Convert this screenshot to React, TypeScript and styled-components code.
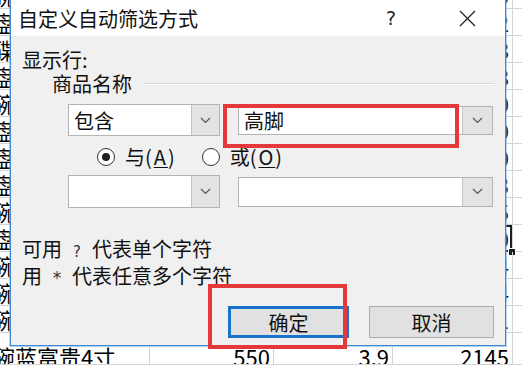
import { createGlobalStyle, styled } from "styled-components"

const GlobalStyle = createGlobalStyle`
  html, body {
    margin: 0;
    padding: 0;
  }
  body {
    width: 522px;
    height: 365px;
    overflow: hidden;
    background: #ffffff;
    font-family: "Noto Sans CJK SC", "Noto Sans", sans-serif;
    color: #000;
  }
`

type SheetRow = { name: string; b: string; c: string; d: string }

const sheetRows: SheetRow[] = [
  { name: "碗白瓷4寸", b: "320", c: "2.5", d: "800" },
  { name: "盘青花8寸", b: "410", c: "4.2", d: "1722" },
  { name: "碟釉下彩", b: "260", c: "1.8", d: "468" },
  { name: "盘金边7寸", b: "180", c: "5.6", d: "1008" },
  { name: "碗青花5寸", b: "300", c: "3.0", d: "900" },
  { name: "盘描金10寸", b: "150", c: "8.8", d: "1320" },
  { name: "盘玲珑6寸", b: "275", c: "4.0", d: "1100" },
  { name: "盘粉彩9寸", b: "205", c: "6.5", d: "1333" },
  { name: "碗骨瓷6寸", b: "330", c: "4.5", d: "1485" },
  { name: "盘白玉8寸", b: "240", c: "5.0", d: "1200" },
  { name: "碗釉里红", b: "190", c: "3.6", d: "684" },
  { name: "碗蓝边4寸", b: "460", c: "2.4", d: "1104" },
  { name: "碗冰裂纹", b: "210", c: "6.1", d: "1281" },
  { name: "碗蓝富贵4寸", b: "550", c: "3.9", d: "2145" },
]

const Sheet = styled.div`
  position: relative;
  width: 522px;
  height: 365px;
  overflow: hidden;
  background: #ffffff;
`

const Rows = styled.div`
  margin-top: -18px;
  display: flex;
  flex-direction: column;
`

const Row = styled.div<{ $tall?: boolean }>`
  display: grid;
  grid-template-columns: 150px 124px 119px 120px 40px;
  height: ${(p) => (p.$tall ? 32 : 27)}px;
  border-bottom: 1px solid #d4d4d4;
  box-sizing: border-box;
`

const Cell = styled.div<{ $align?: "left" | "right"; $tall?: boolean; $selected?: boolean }>`
  position: relative;
  border-right: 1px solid #d4d4d4;
  font-family: "Noto Sans CJK SC", sans-serif;
  font-size: 22px;
  line-height: 27px;
  padding-top: ${(p) => (p.$tall ? 10 : 0)}px;
  white-space: nowrap;
  overflow: ${(p) => (p.$selected ? "visible" : "hidden")};
  text-align: ${(p) => p.$align ?? "left"};
  padding-right: ${(p) => (p.$align === "right" ? 3 : 0)}px;
  text-indent: ${(p) => (p.$align === "right" ? 0 : -7)}px;
  box-shadow: ${(p) => (p.$selected ? "inset 0 0 0 2px #1e1e1e" : "none")};

  &::after {
    content: "";
    display: ${(p) => (p.$selected ? "block" : "none")};
    position: absolute;
    right: -4px;
    bottom: -4px;
    width: 6px;
    height: 6px;
    background: #1e1e1e;
    border: 1px solid #fff;
  }
`

const Dialog = styled.div`
  position: absolute;
  left: 10px;
  top: -1px;
  width: 496px;
  height: 347px;
  box-sizing: border-box;
  border: 1px solid #3f8ad8;
  box-shadow: 0 0 0 1px rgba(120, 175, 230, 0.55);
  display: flex;
  flex-direction: column;
  background: #f0f0f0;
`

const TitleBar = styled.div`
  height: 36px;
  flex: none;
  background: #ffffff;
  display: flex;
  align-items: center;
  padding: 0 15px 0 7px;
`

const Title = styled.div`
  font-size: 20px;
  line-height: 24px;
  color: #111;
  margin-top: 2px;
`

const TitleButton = styled.div<{ $gap?: number }>`
  width: 46px;
  height: 30px;
  display: flex;
  align-items: center;
  justify-content: center;
  margin-left: ${(p) => p.$gap ?? 0}px;
  font-family: "DejaVu Sans", sans-serif;
  font-size: 19px;
  color: #222;
`

const Body = styled.div`
  flex: 1;
  padding: 12px 11px 0 11px;
  display: flex;
  flex-direction: column;
`

const Text = styled.div`
  font-size: 20px;
  line-height: 24px;
  color: #111;
  white-space: nowrap;
`

const GroupHead = styled.div`
  display: flex;
  align-items: center;
  padding-left: 30px;
`

const GroupLine = styled.div`
  flex: 1;
  margin-left: 11px;
  border-top: 1px solid #d9d9d9;
  border-bottom: 1px solid #ffffff;
`

const ConditionRow = styled.div<{ $top: number; $h: number }>`
  display: flex;
  align-items: center;
  gap: 18px;
  padding-left: 46px;
  margin-top: ${(p) => p.$top}px;
  height: ${(p) => p.$h}px;
`

const Combo = styled.div<{ $w: number; $h: number }>`
  width: ${(p) => p.$w}px;
  height: ${(p) => p.$h}px;
  box-sizing: border-box;
  display: flex;
  border: 1px solid #b3b3b3;
  background: #ffffff;
`

const Field = styled.div`
  flex: 1;
  display: flex;
  align-items: center;
  padding-left: 5px;
  font-size: 20px;
  color: #111;
`

const DropButton = styled.div<{ $w: number }>`
  width: ${(p) => p.$w}px;
  flex: none;
  display: flex;
  align-items: center;
  justify-content: center;
  background: #e3e3e3;
  border-left: 1px solid #c4c4c4;
`

const RadioRow = styled.div`
  display: flex;
  align-items: center;
  height: 24px;
  margin-top: 9px;
  padding-left: 75px;
`

const RadioItem = styled.label<{ $gap?: number }>`
  display: flex;
  align-items: center;
  gap: 10px;
  margin-left: ${(p) => p.$gap ?? 0}px;
`

const RadioCircle = styled.span<{ $checked?: boolean }>`
  width: 18px;
  height: 18px;
  box-sizing: border-box;
  border-radius: 50%;
  border: 1px solid #333;
  background: #fff;
  display: flex;
  align-items: center;
  justify-content: center;

  &::after {
    content: "";
    display: ${(p) => (p.$checked ? "block" : "none")};
    width: 8px;
    height: 8px;
    border-radius: 50%;
    background: #222;
  }
`

const RadioText = styled.span`
  font-size: 20px;
  line-height: 24px;
  color: #111;

  & > i {
    font-style: normal;
    letter-spacing: 2px;
  }
  & u {
    text-decoration-thickness: 1px;
    text-underline-offset: 2px;
  }
`

const Help = styled.div`
  margin-top: 29px;
  display: flex;
  flex-direction: column;
`

const Mark = styled.span<{ $size: number }>`
  display: inline-block;
  width: 30px;
  text-align: center;
  font-family: "DejaVu Sans", sans-serif;
  font-size: ${(p) => p.$size}px;
  color: #333;
`

const ButtonRow = styled.div`
  margin-top: 16px;
  display: flex;
  justify-content: flex-end;
  gap: 20px;
`

const Button = styled.div<{ $w: number; $primary?: boolean }>`
  width: ${(p) => p.$w}px;
  height: 32px;
  box-sizing: border-box;
  display: flex;
  align-items: center;
  justify-content: center;
  background: #e1e1e1;
  border: ${(p) => (p.$primary ? "3px solid #1a72cf" : "1px solid #adadad")};
  font-size: 20px;
  color: #111;
`

const Highlight = styled.div<{ $l: number; $t: number; $w: number; $h: number }>`
  position: absolute;
  left: ${(p) => p.$l}px;
  top: ${(p) => p.$t}px;
  width: ${(p) => p.$w}px;
  height: ${(p) => p.$h}px;
  box-sizing: border-box;
  border: 4px solid #e5383b;
  pointer-events: none;
`

const Chevron = () => (
  <svg width="11" height="7" viewBox="0 0 11 7">
    <polyline points="1,1 5.5,5.5 10,1" fill="none" stroke="#555" strokeWidth="1.2" />
  </svg>
)

const CloseIcon = () => (
  <svg width="17" height="17" viewBox="0 0 17 17">
    <line x1="1" y1="1" x2="16" y2="16" stroke="#222" strokeWidth="1.3" />
    <line x1="16" y1="1" x2="1" y2="16" stroke="#222" strokeWidth="1.3" />
  </svg>
)

export default function App() {
  return (
    <>
      <GlobalStyle />
      <Sheet>
        <Rows>
          {sheetRows.map((r, i) => {
            const tall = i === sheetRows.length - 1
            return (
              <Row key={i} $tall={tall}>
                <Cell $tall={tall}>{r.name}</Cell>
                <Cell $align="right" $tall={tall}>{r.b}</Cell>
                <Cell $align="right" $tall={tall}>{r.c}</Cell>
                <Cell $align="right" $tall={tall} $selected={i === 9}>
                  {r.d}
                </Cell>
                <Cell $tall={tall} />
              </Row>
            )
          })}
        </Rows>

        <Dialog>
          <TitleBar>
            <Title>自定义自动筛选方式</Title>
            <TitleButton style={{ marginLeft: "auto" }}>?</TitleButton>
            <TitleButton $gap={30}>
              <CloseIcon />
            </TitleButton>
          </TitleBar>

          <Body>
            <Text>显示行:</Text>
            <GroupHead>
              <Text>商品名称</Text>
              <GroupLine />
            </GroupHead>

            <ConditionRow $top={8} $h={32}>
              <Combo $w={152} $h={32}>
                <Field>包含</Field>
                <DropButton $w={27}>
                  <Chevron />
                </DropButton>
              </Combo>
              <Combo $w={255} $h={29}>
                <Field>高脚</Field>
                <DropButton $w={29}>
                  <Chevron />
                </DropButton>
              </Combo>
            </ConditionRow>

            <RadioRow>
              <RadioItem>
                <RadioCircle $checked />
                <RadioText>
                  与<i>(<u>A</u>)</i>
                </RadioText>
              </RadioItem>
              <RadioItem $gap={25}>
                <RadioCircle />
                <RadioText>
                  或<i>(<u>O</u>)</i>
                </RadioText>
              </RadioItem>
            </RadioRow>

            <ConditionRow $top={6} $h={33}>
              <Combo $w={152} $h={33}>
                <Field />
                <DropButton $w={27}>
                  <Chevron />
                </DropButton>
              </Combo>
              <Combo $w={255} $h={30}>
                <Field />
                <DropButton $w={29}>
                  <Chevron />
                </DropButton>
              </Combo>
            </ConditionRow>

            <Help>
              <Text>
                可用<Mark $size={15}>?</Mark>代表单个字符
              </Text>
              <Text>
                用<Mark $size={17}>*</Mark>代表任意多个字符
              </Text>
            </Help>

            <ButtonRow>
              <Button $w={121} $primary>
                确定
              </Button>
              <Button $w={125}>取消</Button>
            </ButtonRow>
          </Body>

          <Highlight $l={212} $t={104} $w={236} $h={44} />
          <Highlight $l={197} $t={284} $w={139} $h={65} />
        </Dialog>
      </Sheet>
    </>
  )
}
